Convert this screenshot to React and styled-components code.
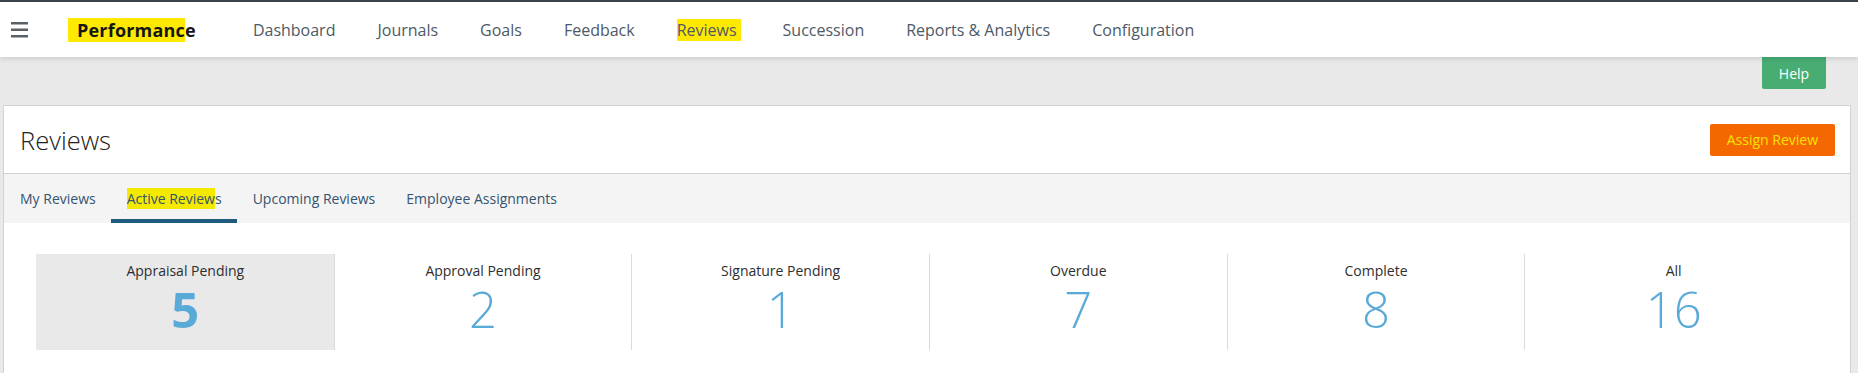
import React from "react";
import styled, { createGlobalStyle } from "styled-components";

const GlobalStyle = createGlobalStyle`
    html, body {
        margin: 0;
        padding: 0;
        background: #e9e9e9;
        font-family: "Open Sans", "Liberation Sans", sans-serif;
        overflow: hidden;
    }
    * {
        box-sizing: border-box;
    }
`;

const Page = styled.div`
    height: 100vh;
    overflow: hidden;
`;

const TopStrip = styled.div`
    height: 2px;
    background: #3b444c;
`;

const NavBar = styled.nav`
    position: relative;
    z-index: 1;
    height: 55px;
    display: flex;
    align-items: center;
    padding-left: 11px;
    background: #ffffff;
    box-shadow: 0 2px 5px rgba(0, 0, 0, 0.12);
`;

const Burger = styled.svg`
    display: block;
    flex: none;
    margin-top: 1px;
`;

const Brand = styled.div`
    margin-left: 40px;
    font-size: 18px;
    font-weight: 700;
    line-height: 18px;
    letter-spacing: 0.2px;
    color: #161616;
`;

const Marker = styled.span`
    background: #ffe900;
    padding-left: ${props => props.$padLeft || 0}px;
    padding-right: ${props => props.$padRight || 0}px;
`;

const NavLinks = styled.ul`
    display: flex;
    gap: 42px;
    margin: 0 0 0 57px;
    padding: 0;
    list-style: none;
`;

const NavLink = styled.li`
    font-size: 16px;
    line-height: 16px;
    color: #4e5966;
`;

const HelpRow = styled.div`
    display: flex;
    justify-content: flex-end;
    padding-right: 32px;
    margin-bottom: 16px;
`;

const HelpButton = styled.button`
    width: 64px;
    height: 32px;
    border: none;
    border-radius: 0 0 2px 2px;
    background: #48ad73;
    color: #ffffff;
    font-family: inherit;
    font-size: 14px;
`;

const Card = styled.section`
    margin: 0 7px 0 3px;
    height: 280px;
    background: #ffffff;
    border: 1px solid #d2d2d2;
`;

const CardHeader = styled.header`
    height: 68px;
    display: flex;
    align-items: center;
    justify-content: space-between;
    padding: 0 15px 0 16px;
    border-bottom: 1px solid #d0d0d0;
`;

const Title = styled.h1`
    margin: 0;
    font-size: 25.5px;
    font-weight: 300;
    color: #222;
`;

const AssignButton = styled.button`
    height: 32px;
    padding: 0 17px;
    border: none;
    border-radius: 2px;
    background: #f56700;
    color: #f7e300;
    font-family: inherit;
    font-size: 14px;
`;

const TabBar = styled.div`
    display: flex;
    height: 49px;
    background: #f4f4f4;
`;

const Tab = styled.div`
    display: flex;
    align-items: center;
    padding: 4px 15px 0 16px;
    font-size: 14px;
    line-height: 20px;
    color: #34536f;
    border-bottom: 4px solid ${props => (props.$active ? "#1f5a7d" : "transparent")};
`;

const TabMarker = styled.span`
    background: #f4ea00;
    padding: 1px 0;
`;

const Stats = styled.div`
    display: grid;
    grid-template-columns: repeat(6, 1fr);
    padding: 31px 28px 0 32px;
`;

const Stat = styled.div`
    height: 96px;
    padding-top: 7px;
    text-align: center;
    background: ${props => (props.$active ? "#e9e9e9" : "transparent")};
    border-left: 1px solid ${props => (props.$first ? "transparent" : "#dadada")};
`;

const StatLabel = styled.div`
    font-size: 14px;
    line-height: 20px;
    color: #2e2e2e;
`;

const StatValue = styled.div`
    font-size: 49px;
    line-height: 56px;
    font-weight: ${props => (props.$active ? 700 : 300)};
    color: #5aaad8;
`;

const links = [
    "Dashboard",
    "Journals",
    "Goals",
    "Feedback",
    "Reviews",
    "Succession",
    "Reports & Analytics",
    "Configuration",
];

const stats = [
    { label: "Appraisal Pending", value: 5 },
    { label: "Approval Pending", value: 2 },
    { label: "Signature Pending", value: 1 },
    { label: "Overdue", value: 7 },
    { label: "Complete", value: 8 },
    { label: "All", value: 16 },
];

const App = () => (
    <Page>
        <GlobalStyle />
        <TopStrip />
        <NavBar>
            <Burger width="17" height="16" viewBox="0 0 17 16">
                <rect x="0" y="0" width="17" height="2.5" fill="#5a6068" />
                <rect x="0" y="6.5" width="17" height="2.5" fill="#5a6068" />
                <rect x="0" y="13" width="17" height="2.5" fill="#5a6068" />
            </Burger>
            <Brand>
                <Marker $padLeft={9}>Performanc</Marker>e
            </Brand>
            <NavLinks>
                {links.map(link =>
                    link === "Reviews" ? (
                        <NavLink key={link}>
                            <Marker $padRight={4}>{link}</Marker>
                        </NavLink>
                    ) : (
                        <NavLink key={link}>{link}</NavLink>
                    )
                )}
            </NavLinks>
        </NavBar>
        <HelpRow>
            <HelpButton>Help</HelpButton>
        </HelpRow>
        <Card>
            <CardHeader>
                <Title>Reviews</Title>
                <AssignButton>Assign Review</AssignButton>
            </CardHeader>
            <TabBar>
                <Tab>My Reviews</Tab>
                <Tab $active>
                    <span>
                        <TabMarker>Active Review</TabMarker>s
                    </span>
                </Tab>
                <Tab>Upcoming Reviews</Tab>
                <Tab>Employee Assignments</Tab>
            </TabBar>
            <Stats>
                {stats.map((s, i) => (
                    <Stat key={s.label} $active={i === 0} $first={i === 0}>
                        <StatLabel>{s.label}</StatLabel>
                        <StatValue $active={i === 0}>{s.value}</StatValue>
                    </Stat>
                ))}
            </Stats>
        </Card>
    </Page>
);

export default App;
